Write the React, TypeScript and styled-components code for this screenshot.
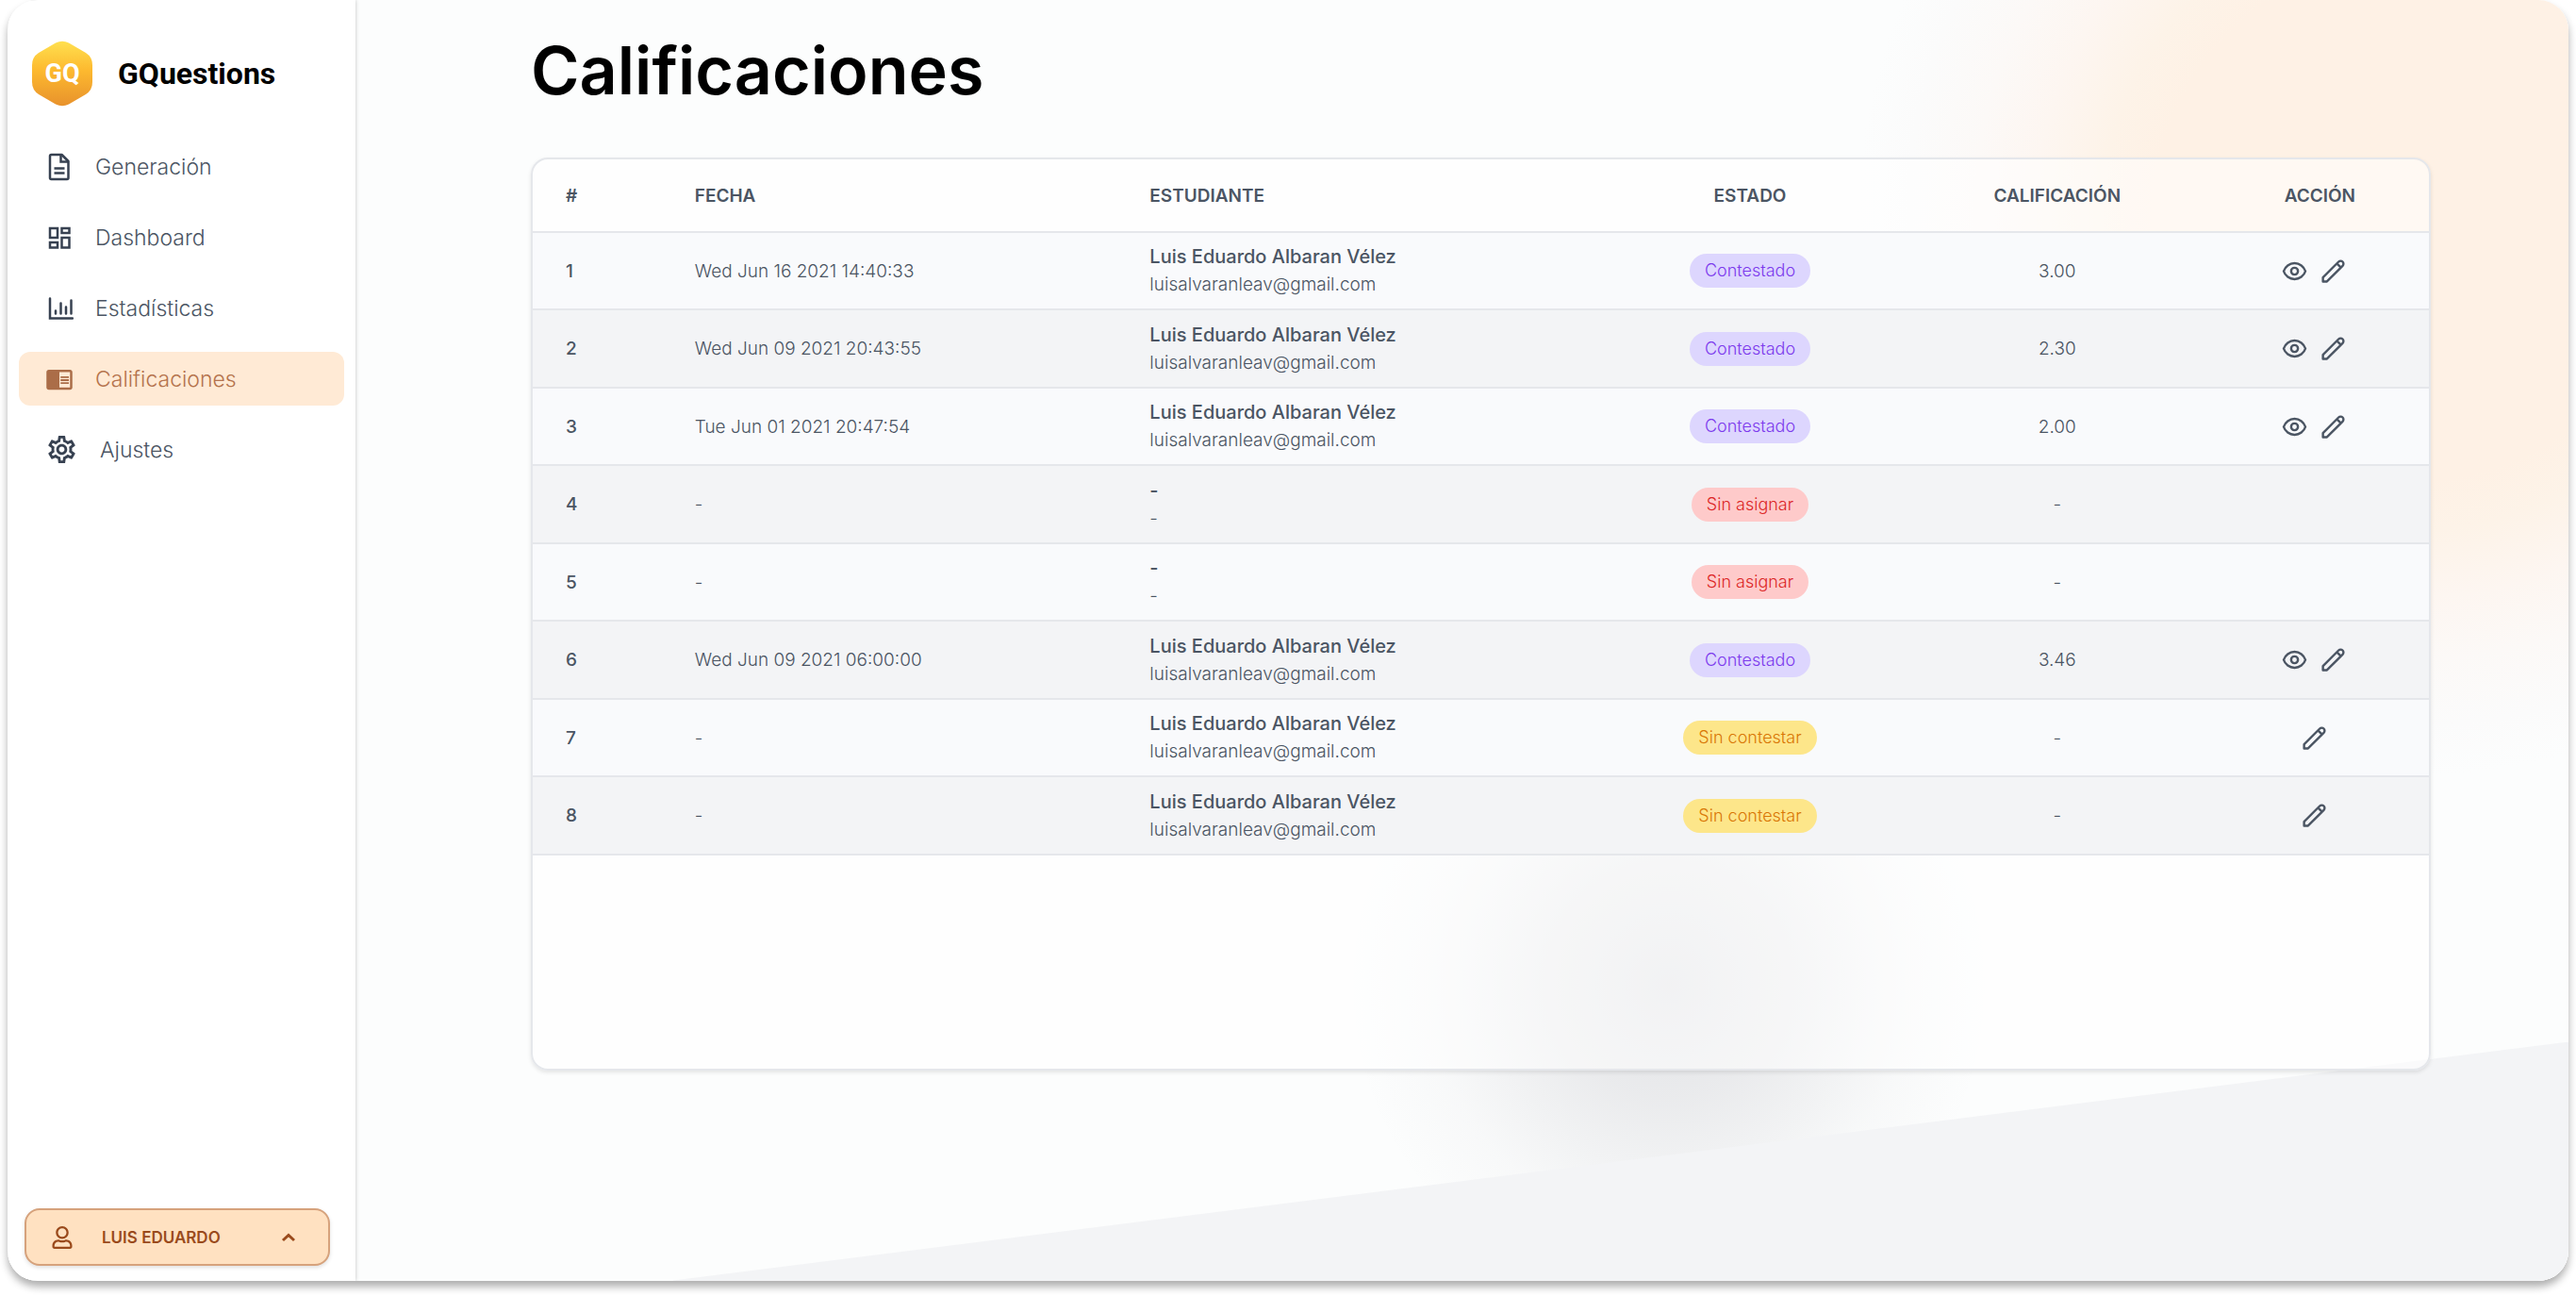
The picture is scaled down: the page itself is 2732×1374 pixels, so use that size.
import React from "react";
import styled, { createGlobalStyle, css } from "styled-components";
import { HiOutlineEye, HiOutlinePencil } from "react-icons/hi";
import { FaRegUser } from "react-icons/fa";
import { MdChromeReaderMode, MdOutlineSettings } from "react-icons/md";

const GlobalStyle = createGlobalStyle`
  *, *::before, *::after { box-sizing: border-box; }
  body {
    margin: 0;
    background: #fff;
    font-family: Inter, "Noto Sans", sans-serif;
    color: #4b5563;
  }
  h1, p { margin: 0; }
`;

const Page = styled.div`
  min-height: 100vh;
  padding: 0 8px 16px;
  display: flex;
`;

const ShellFrame = styled.div`
  flex: 1;
  display: flex;
  border-radius: 32px;
  box-shadow: 0 6px 8px rgba(0, 0, 0, 0.32);
`;

const Shell = styled.div`
  flex: 1;
  display: flex;
  position: relative;
  isolation: isolate;
  overflow: hidden;
  border-radius: 32px;
  background: #fcfdfd;
`;

const Backdrop = styled.div`
  position: absolute;
  inset: 0;
  z-index: -1;
  background:
    linear-gradient(to bottom right, transparent calc(50% - 1px), #f3f4f6 50%) right bottom / 2010px 253px no-repeat,
    radial-gradient(
      circle 340px at 1762px 1044px,
      rgba(112, 112, 126, 0.19),
      rgba(112, 112, 126, 0.13) 35%,
      rgba(112, 112, 126, 0.03) 75%,
      transparent
    ),
    radial-gradient(
      circle 590px at calc(100% - 164px) 232px,
      #fef1e5,
      #fef1e5 47%,
      #fdf3e8 56%,
      #fdf6f1 68%,
      #fcf9f7 79%,
      #fbfbfb 91%,
      #fcfdfd
    );
`;

const Sidebar = styled.aside`
  width: 369px;
  flex: none;
  display: flex;
  flex-direction: column;
  padding: 42px 12px 16px;
  background: #fff;
  box-shadow: 0 0 4px rgba(0, 0, 0, 0.25);
`;

const Brand = styled.a`
  display: flex;
  align-items: center;
  gap: 26px;
  margin: 0 13px 34px;
  color: #000;
  font: 700 32px/72px Roboto, sans-serif;
  text-decoration: none;
`;

const Nav = styled.nav`
  display: flex;
  flex-direction: column;
  gap: 18px;
`;

const NavLink = styled.a<{ $active?: boolean }>`
  display: flex;
  align-items: center;
  gap: 23px;
  height: 57px;
  padding: 0 28px;
  border-radius: 12px;
  color: #4b5563;
  font-size: 23px;
  font-weight: 300;
  text-decoration: none;
  svg { color: #374151; flex: none; }
  ${(p) =>
    p.$active &&
    css`
      background: #ffead5;
      color: #b5734d;
      svg { color: #ab6d48; }
    `}
`;

const UserButton = styled.button`
  display: flex;
  align-items: center;
  height: 61px;
  margin: auto 15px 0 6px;
  padding: 0 34px 0 26px;
  border: 2px solid #d6a27c;
  border-radius: 16px;
  background: #ffe1c1;
  box-shadow: 0 2px 4px rgba(0, 0, 0, 0.12);
  color: #9a4a1c;
  font: 600 17px Inter, sans-serif;
  span { flex: 1; margin-left: 30px; text-align: left; }
`;

const Main = styled.main`
  flex: 1;
  min-width: 0;
  display: flex;
  flex-direction: column;
  padding: 26px 146px 223px 186px;
`;

const Title = styled.h1`
  color: #000;
  font-size: 70px;
  font-weight: 600;
  line-height: 98px;
  margin-bottom: 43px;
`;

const Card = styled.section`
  flex: 1;
  overflow: hidden;
  border: 2px solid #e5e7eb;
  border-radius: 18px;
  background: rgba(255, 255, 255, 0.55);
  background-clip: padding-box;
  box-shadow: 0 2px 4px rgba(0, 0, 0, 0.1);
`;

const Table = styled.table`
  width: 100%;
  border-collapse: collapse;
  table-layout: fixed;
`;

const Th = styled.th<{ $center?: boolean }>`
  height: 77px;
  padding: 0 35px;
  border-bottom: 2px solid #e5e7eb;
  font-size: 19px;
  font-weight: 600;
  text-align: ${(p) => (p.$center ? "center" : "left")};
`;

const Td = styled.td<{ $center?: boolean; $strong?: boolean }>`
  height: 82px;
  padding: 0 35px;
  border-bottom: 2px solid #e5e7eb;
  font-size: 19px;
  font-weight: ${(p) => (p.$strong ? 500 : 300)};
  line-height: 29px;
  text-align: ${(p) => (p.$center ? "center" : "left")};
`;

const Row = styled.tr`
  background: #f9fafc;
  &:nth-child(even) { background: #f3f4f6; }
  &:nth-child(even) ${Td} { height: 83px; }
`;

const Name = styled.p`
  font-size: 20px;
  font-weight: 500;
`;

type Status = "Contestado" | "Sin asignar" | "Sin contestar";

const tones: Record<Status, string> = {
  Contestado: "background: #ddd6fe; color: #7c3aed;",
  "Sin asignar": "background: #fecaca; color: #dc2626;",
  "Sin contestar": "background: #fde68a; color: #d97706;",
};

const Badge = styled.span<{ $status: Status }>`
  display: inline-block;
  padding: 0 16px;
  border-radius: 18px;
  font-size: 18px;
  line-height: 36px;
  ${(p) => tones[p.$status]}
`;

const Actions = styled.div`
  display: flex;
  justify-content: center;
  gap: 12px;
  padding-right: 12px;
`;

const IconButton = styled.button`
  display: flex;
  padding: 0;
  border: 0;
  background: none;
  color: #4b5563;
`;

const Logo = () => (
  <svg width="66" height="72" viewBox="0 0 66 72" aria-hidden="true">
    <defs>
      <linearGradient id="gq" x1="0" y1="0" x2="0" y2="1">
        <stop offset="0" stopColor="#ffe04f" />
        <stop offset=".45" stopColor="#fdb92f" />
        <stop offset="1" stopColor="#e8922c" />
      </linearGradient>
    </defs>
    <path
      d="M26 3.500Q33 0 40 3.500L58 14Q65 18.500 65 27V45Q65 53.500 58 58L40 68.500Q33 72 26 68.500L8 58Q1 53.500 1 45V27Q1 18.500 8 14Z"
      fill="url(#gq)"
    />
    <text x="33" y="45" textAnchor="middle" fontFamily="Roboto, sans-serif" fontWeight="700" fontSize="27" fill="#fff">
      GQ
    </text>
  </svg>
);

const FileIcon = () => (
  <svg width="30" height="30" viewBox="0 0 30 30" fill="none" stroke="currentColor" strokeWidth="2.5" aria-hidden="true">
    <path d="M6.500 2H17.500L24.500 9V26.500Q24.500 28 23 28H6.500Q5 28 5 26.500V3.500Q5 2 6.500 2Z" strokeLinejoin="round" />
    <path d="M16.500 2V9.500H24.500M9.500 16.500H20.500M9.500 21.500H20.500" />
  </svg>
);

const DashboardIcon = () => (
  <svg width="30" height="30" viewBox="0 0 30 30" fill="none" stroke="currentColor" strokeWidth="2.5" aria-hidden="true">
    <path d="M5 5H13V15H5ZM17.500 5H25.500V10H17.500ZM5 20H13V25.500H5ZM17.500 15H25.500V25.500H17.500Z" />
  </svg>
);

const ChartIcon = () => (
  <svg width="30" height="30" viewBox="0 0 30 30" fill="none" stroke="currentColor" strokeWidth="2.5" strokeLinecap="round" aria-hidden="true">
    <path d="M5 4.500V25.500H29M11 17.500V20.500M16.500 9.500V20.500M22 13.500V20.500M27.500 6.500V20.500" />
  </svg>
);

const ChevronIcon = () => (
  <svg width="16" height="12" viewBox="0 0 16 12" fill="none" stroke="currentColor" strokeWidth="3" aria-hidden="true">
    <path d="M2 9L8 3.500L14 9" />
  </svg>
);

const links = [
  { label: "Generación", icon: <FileIcon /> },
  { label: "Dashboard", icon: <DashboardIcon /> },
  { label: "Estadísticas", icon: <ChartIcon /> },
  { label: "Calificaciones", icon: <MdChromeReaderMode size={30} />, active: true },
  { label: "Ajustes", icon: <MdOutlineSettings size={35} /> },
];

const me = { name: "Luis Eduardo Albaran Vélez", mail: "luisalvaranleav@gmail.com" };
const nobody = { name: "-", mail: "-" };

const rows: { date: string; who: typeof me; status: Status; grade: string }[] = [
  { date: "Wed Jun 16 2021 14:40:33", who: me, status: "Contestado", grade: "3.00" },
  { date: "Wed Jun 09 2021 20:43:55", who: me, status: "Contestado", grade: "2.30" },
  { date: "Tue Jun 01 2021 20:47:54", who: me, status: "Contestado", grade: "2.00" },
  { date: "-", who: nobody, status: "Sin asignar", grade: "-" },
  { date: "-", who: nobody, status: "Sin asignar", grade: "-" },
  { date: "Wed Jun 09 2021 06:00:00", who: me, status: "Contestado", grade: "3.46" },
  { date: "-", who: me, status: "Sin contestar", grade: "-" },
  { date: "-", who: me, status: "Sin contestar", grade: "-" },
];

export default function App() {
  return (
    <Page>
      <GlobalStyle />
      <ShellFrame>
        <Shell>
          <Backdrop />
          <Sidebar>
            <Brand href="#">
              <Logo />
              GQuestions
            </Brand>
            <Nav>
              {links.map((l) => (
                <NavLink key={l.label} href="#" $active={l.active}>
                  {l.icon}
                  {l.label}
                </NavLink>
              ))}
            </Nav>
            <UserButton type="button">
              <FaRegUser size={24} />
              <span>LUIS EDUARDO</span>
              <ChevronIcon />
            </UserButton>
          </Sidebar>
          <Main>
            <Title>Calificaciones</Title>
            <Card>
              <Table>
                <colgroup>
                  <col style={{ width: "6.8%" }} />
                  <col style={{ width: "24%" }} />
                  <col style={{ width: "25.3%" }} />
                  <col style={{ width: "16.2%" }} />
                  <col style={{ width: "16.2%" }} />
                  <col style={{ width: "11.5%" }} />
                </colgroup>
                <thead>
                  <tr>
                    <Th>#</Th>
                    <Th>FECHA</Th>
                    <Th>ESTUDIANTE</Th>
                    <Th $center>ESTADO</Th>
                    <Th $center>CALIFICACIÓN</Th>
                    <Th $center>ACCIÓN</Th>
                  </tr>
                </thead>
                <tbody>
                  {rows.map((r, i) => (
                    <Row key={i}>
                      <Td $strong>{i + 1}</Td>
                      <Td>{r.date}</Td>
                      <Td>
                        <Name>{r.who.name}</Name>
                        <p>{r.who.mail}</p>
                      </Td>
                      <Td $center>
                        <Badge $status={r.status}>{r.status}</Badge>
                      </Td>
                      <Td $center>{r.grade}</Td>
                      <Td $center>
                        <Actions>
                          {r.status === "Contestado" && (
                            <IconButton type="button" aria-label="Ver">
                              <HiOutlineEye size={29} />
                            </IconButton>
                          )}
                          {r.status !== "Sin asignar" && (
                            <IconButton type="button" aria-label="Editar">
                              <HiOutlinePencil size={29} />
                            </IconButton>
                          )}
                        </Actions>
                      </Td>
                    </Row>
                  ))}
                </tbody>
              </Table>
            </Card>
          </Main>
        </Shell>
      </ShellFrame>
    </Page>
  );
}
